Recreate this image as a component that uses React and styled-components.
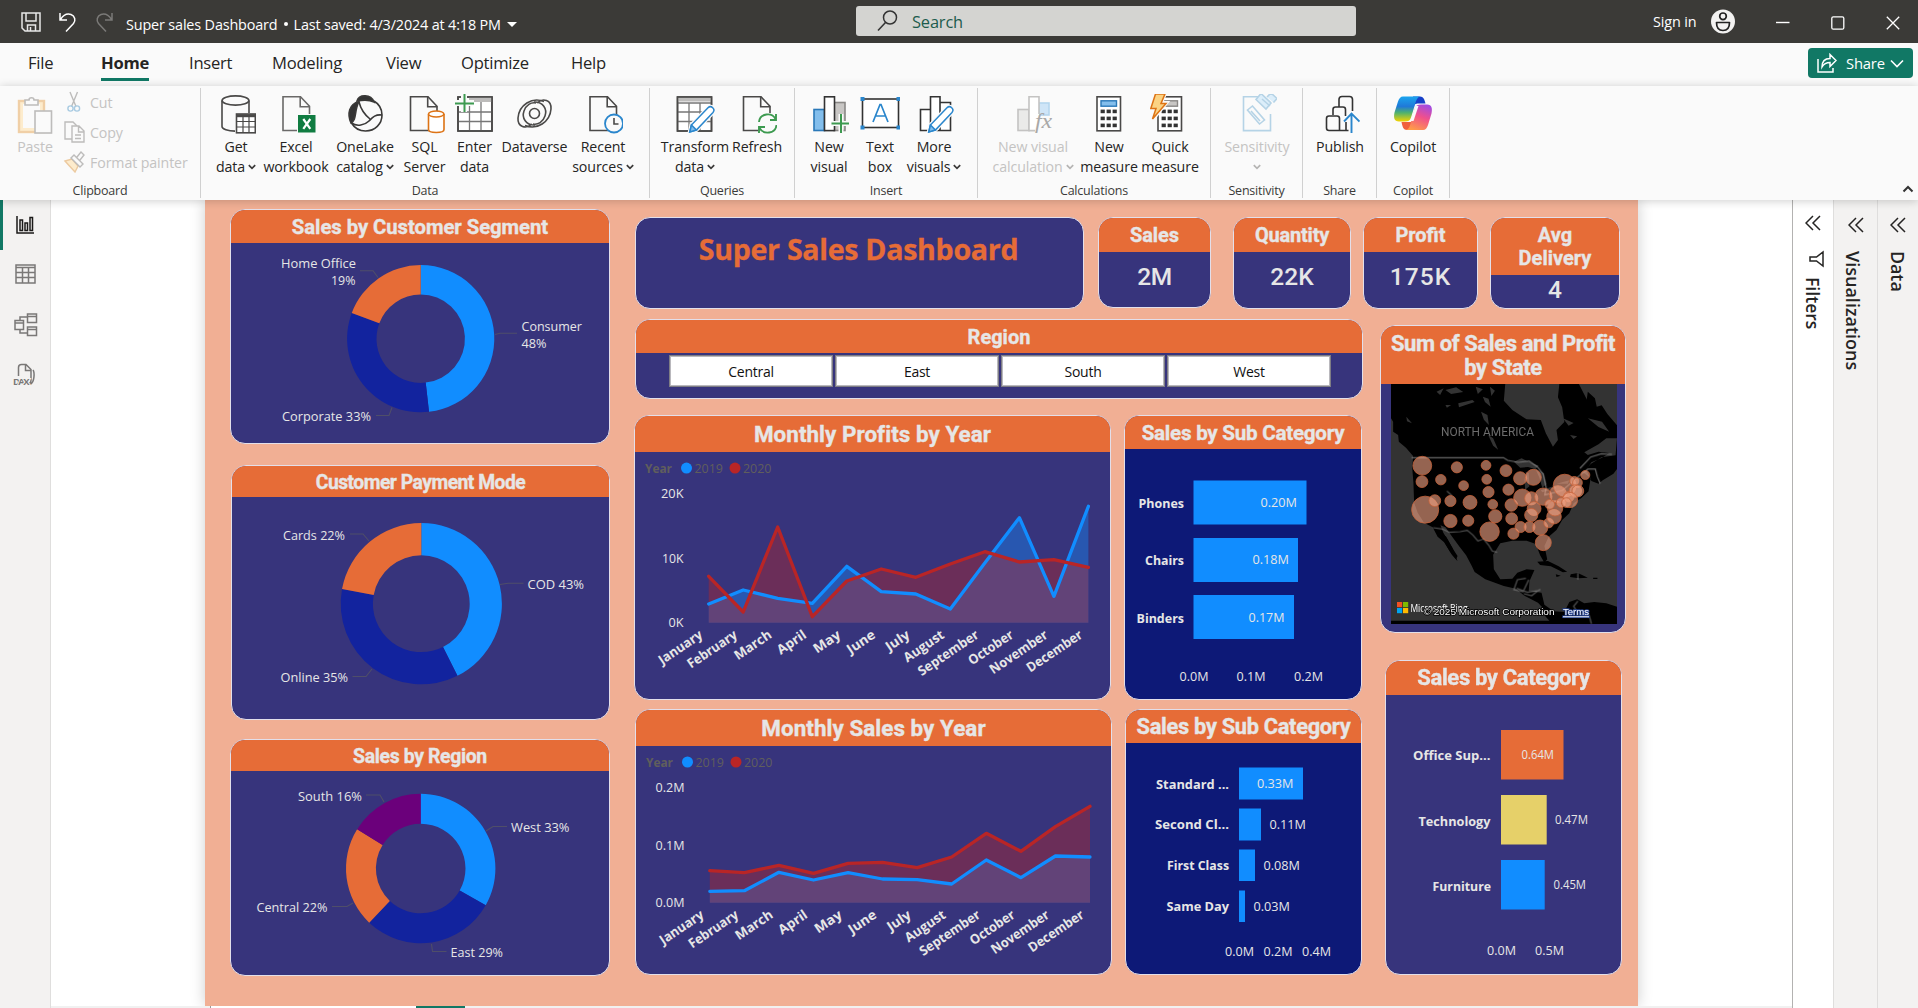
import React from "react";
import styled, { createGlobalStyle } from "styled-components";

const C = {
  bar: "#3b3a37", ribbon: "#fafafa", pane: "#f3f2f1", accent: "#117865",
  page: "#f1af94", orange: "#e66c37", indigo: "#37347c", navy: "#0d1977",
  blue: "#118dff", deep: "#12239e", purple: "#6b007b", yellow: "#e6d069",
  red: "#b92526", light: "#e6e6e6",
};
const UI = `"Open Sans", "Noto Sans", sans-serif`;
const DIN = `Roboto, "Liberation Sans", sans-serif`;

const Global = createGlobalStyle`
  * { box-sizing: border-box; }
  body { margin: 0; font-family: ${UI}; overflow: hidden; background: #fff; }
  svg { display: block; flex: none; }
`;

/* ---------- shell ---------- */
const Shell = styled.div`
  width: 1918px; height: 1008px; display: flex; flex-direction: column; overflow: hidden; color: #252423;
`;
const TitleBar = styled.header`
  height: 43px; flex: none; background: ${C.bar}; color: #fff; display: flex; align-items: center;
  padding-left: 20px; font-size: 14.4px; letter-spacing: -0.15px;
`;
const QuickIcons = styled.div`display: flex; gap: 16px; width: 106px; align-items: center;`;
const DocName = styled.div`width: 730px; display: flex; align-items: center; gap: 6px; white-space: pre; padding-top: 5px;`;
const Dot = styled.i`width: 4px; height: 4px; border-radius: 50%; background: #fff;`;
const Caret = styled.i`border: 5px solid transparent; border-top-color: #fff; border-bottom: 0;`;
const SearchBox = styled.div`
  width: 500px; height: 30px; background: #d4d4d1; border-radius: 3px; display: flex; align-items: center;
  gap: 14px; padding-left: 21px; color: #1d5c4d; font-size: 16.4px; margin-top: -1px;
`;
const SignIn = styled.div`margin-left: 297px; width: 58px; white-space: nowrap;`;
const WinButtons = styled.div`display: flex; gap: 41px; margin-left: 41px; padding-top: 2px;`;

const TabBar = styled.nav`
  height: 43px; flex: none; background: ${C.ribbon}; display: flex; padding: 4px 5px 0 28px; gap: 40px; font-size: 16.6px; position: relative;
`;
const Tab = styled.span`
  height: 34px; line-height: 32px; letter-spacing: -0.25px; white-space: nowrap; width: ${p => p.$w}px;
  font-weight: ${p => (p.$on ? 700 : 400)}; border-bottom: 3px solid ${p => (p.$on ? C.accent : "transparent")};
`;
const ShareButton = styled.button`
  margin: 1px 0 0 auto; width: 105px; height: 30px; border: 0; border-radius: 4px; background: ${C.accent}; color: #fff;
  font: 14.8px ${UI}; display: flex; align-items: center; padding: 0 9px; letter-spacing: -0.2px;
`;
const ShareText = styled.span`flex: 1; padding-left: 9px; text-align: left;`;

const Ribbon = styled.section`
  height: 114px; flex: none; background: ${C.ribbon}; display: flex; position: relative; z-index: 2;
  box-shadow: 0 1px 9px rgba(0,0,0,0.2);
`;
const Group = styled.div`
  width: ${p => p.$w}px; height: 110px; margin-top: 2px; border-right: 1px solid #d0d0d0; display: flex; flex-direction: column;
`;
const Tools = styled.div`display: flex; height: 89px; padding: 6px 0 0 ${p => p.$pad || 0}px;`;
const GroupName = styled.div`height: 21px; line-height: 28px; text-align: center; font-size: 12.5px; letter-spacing: -0.2px; color: #3b3a39;`;
const Tool = styled.div`
  width: ${p => p.$w}px; display: flex; flex-direction: column; align-items: center; font-size: 14.2px; line-height: 20px;
  letter-spacing: -0.1px; text-align: center; white-space: nowrap; color: ${p => (p.$off ? "#c4c3c2" : "#252423")};
`;
const ToolLabel = styled.div`margin-top: 3px;`;
const Line = styled.div`display: flex; align-items: center; justify-content: center; gap: 3px; min-height: 20px;`;
const ClipList = styled.div`display: flex; flex-direction: column; margin-top: -7px; padding: 0 0 0 4px;`;
const ClipRow = styled.div`height: 30px; display: flex; align-items: center; gap: 5px; font-size: 14.2px; letter-spacing: -0.1px; color: #c4c3c2; white-space: nowrap;`;
const Collapse = styled.div`margin-left: auto; align-self: flex-end; padding: 0 4px 7px 0;`;

const Body = styled.div`flex: 1; display: flex; min-height: 0;`;
const Rail = styled.aside`width: 51px; background: ${C.pane}; border-right: 1px solid #dfdedd;`;
const RailItem = styled.div`
  height: 50px; display: flex; align-items: center; padding: 0 0 0 ${p => (p.$on ? 10 : 13)}px;
  border-left: ${p => (p.$on ? 3 : 0)}px solid ${C.accent};
`;
const Workspace = styled.main`width: 1741px; padding-left: 154px; background: #fff; display: flex; flex-direction: column;`;
const Page = styled.div`
  width: 1433px; height: 806px; flex: none; background: ${C.page}; display: flex; box-shadow: 0 0 14px rgba(0,0,0,0.2);
  padding-left: 25px;
`;
const PageTabs = styled.div`height: 2px; margin-left: -154px; background: #f1f1f1; display: flex; position: relative; padding-left: 159px;`;
const PageTab = styled.i`width: ${p => p.$w}px; background: ${p => p.$c};`;

const Pane = styled.aside`
  width: ${p => p.$w}px; background: ${p => p.$bg}; border-left: 1px solid ${p => p.$line}; display: flex; flex-direction: column;
  align-items: center; padding-top: ${p => p.$top}px; 
`;
const PaneName = styled.div`
  writing-mode: vertical-rl; font-weight: 600; font-size: ${p => p.$fs || 17.4}px; line-height: 20px; margin-top: ${p => p.$mt}px;
  padding-right: ${p => p.$pr || 0}px; white-space: nowrap;
`;
const FunnelSlot = styled.div`padding: 19px 0 0 5px;`;

/* ---------- report ---------- */
const Column = styled.div`width: ${p => p.$w}px; margin-right: ${p => p.$gap || 0}px; padding-top: ${p => p.$top}px; display: flex; flex-direction: column;`;
const Strip = styled.div`display: flex; margin-bottom: ${p => p.$mb || 0}px;`;
const Card = styled.section`
  width: ${p => p.$w}px; height: ${p => p.$h}px; flex: none; border: 1px solid #e3dfea; border-radius: 15px; overflow: hidden;
  background: ${p => p.$bg || C.indigo}; margin: 0 ${p => p.$mr || 0}px ${p => p.$mb || 0}px ${p => p.$ml || 0}px;
`;
const Head = styled.h2`
  margin: 0; height: ${p => p.$h}px; background: ${C.orange}; color: ${C.light}; display: flex; align-items: center; justify-content: center;
  text-align: center; font: 700 ${p => p.$fs || 20}px/${p => p.$lh || 24}px ${DIN}; letter-spacing: ${p => p.$ls || 0}px; white-space: pre;
  padding-top: ${p => p.$pt || 0}px; -webkit-text-stroke: 0.35px ${C.light};
`;
const Banner = styled.h1`
  margin: 0; padding: 12px 2px 0 0; text-align: center; color: ${C.orange}; font: 700 28.6px/38px ${UI}; letter-spacing: -0.3px;
  -webkit-text-stroke: 0.3px ${C.orange};
`;
const Kpi = styled.div`
  text-align: center; color: ${C.light}; font: 500 24.5px/30px ${DIN}; padding-top: ${p => p.$top}px; letter-spacing: ${p => p.$ls || 0}px;
`;
const Slicer = styled.div`display: flex; gap: 2px; padding: 2px 0 0 33px;`;
const SlicerItem = styled.button`
  width: 164px; height: 32px; border: 1px solid #7e7d84; box-shadow: inset 0 0 0 1px #b9b8bd; background: #fff; font: 14px ${UI};
  color: #111; padding: 0; letter-spacing: -0.25px;
`;

/* text fitted to the span [x, x+w] */
const T = ({ x, y, w, s = 12.6, b, fill = C.light, children, ...r }) => (
  <text x={x} y={y} fontSize={s} fontWeight={b ? 700 : 400} fill={fill} fontFamily={UI}
    textLength={w} lengthAdjust="spacingAndGlyphs" {...r}>{children}</text>
);
const Chart = ({ x, y, w, h, children }) => (
  <svg width={w} height={h} viewBox={`${x} ${y} ${w} ${h}`}>{children}</svg>
);

const Donut = ({ cx, cy, R, r, parts }) => {
  let from = 0;
  const pt = (rad, f) => {
    const a = f * 2 * Math.PI;
    return `${(cx + rad * Math.sin(a)).toFixed(2)} ${(cy - rad * Math.cos(a)).toFixed(2)}`;
  };
  return parts.map(([to, color]) => {
    const big = to - from > 0.5 ? 1 : 0;
    const d = `M${pt(R, from)}A${R} ${R} 0 ${big} 1 ${pt(R, to)}L${pt(r, to)}A${r} ${r} 0 ${big} 0 ${pt(r, from)}Z`;
    from = to;
    return <path key={color} d={d} fill={color} />;
  });
};
const Leader = ({ p }) => <polyline points={p} fill="none" stroke="#4f4e69" strokeWidth="1.1" />;

const MONTHS = ["January", "February", "March", "April", "May", "June", "July", "August", "September", "October", "November", "December"];
const MW = [50, 57, 42, 32, 30, 31, 26, 46, 70, 51, 67, 64];
const AreaChart = ({ x, y, w, h, x0, x1, base, s2019, s2020, ticks, lx, ly, my }) => {
  const step = (x1 - x0) / 11;
  const line = s => s.map((v, i) => `${(x0 + i * step).toFixed(1)},${v.toFixed(1)}`).join(" ");
  const area = s => `${x0},${base} ${line(s)} ${x1},${base}`;
  return (
    <Chart x={x} y={y} w={w} h={h}>
      <T x={lx} y={ly} w={27} b fill="#605e5c">Year</T>
      <circle cx={lx + 41.5} cy={ly - 5.2} r="5.5" fill={C.blue} />
      <T x={lx + 49.5} y={ly} w={28.5} fill="#605e5c">2019</T>
      <circle cx={lx + 90} cy={ly - 5.2} r="5.5" fill={C.red} />
      <T x={lx + 98} y={ly} w={28.5} fill="#605e5c">2020</T>
      {ticks.map(([t, tx, ty, tw]) => <T key={t} x={tx} y={ty} w={tw}>{t}</T>)}
      <polygon points={area(s2019)} fill={C.blue} opacity="0.4" />
      <polygon points={area(s2020)} fill={C.red} opacity="0.4" />
      <g fill="none" strokeWidth="3.3" strokeLinejoin="round" strokeLinecap="round">
        <polyline points={line(s2019)} stroke={C.blue} />
        <polyline points={line(s2020)} stroke={C.red} />
      </g>
      {MONTHS.map((m, i) => (
        <text key={m} transform={`translate(${(x0 + i * step - 5).toFixed(1)} ${my}) rotate(-34)`} textAnchor="end" fontSize="13.3"
          fontWeight="700" fill={C.light} fontFamily={UI} textLength={MW[i]} lengthAdjust="spacingAndGlyphs">{m}</text>
      ))}
    </Chart>
  );
};

const px = (o, list) => list.map(v => o + v / 3);

const BarChart = ({ x, y, w, h, bx, bars, axis, axisY }) => (
  <Chart x={x} y={y} w={w} h={h}>
    {bars.map(([name, nx, nw, ny, top, bh, bw, value, vx, vw, vy, color]) => (
      <g key={name}>
        <rect x={bx} y={top} width={bw} height={bh} fill={color || C.blue} />
        <T x={nx} y={ny} w={nw} b>{name}</T>
        <T x={vx} y={vy} w={vw} s={12.2}>{value}</T>
      </g>
    ))}
    {axis.map(([t, tx]) => <T key={t} x={tx} y={axisY} w={29} s={12.2}>{t}</T>)}
  </Chart>
);

const BUBBLES = [
  [175, 782, 27], [174, 830, 17], [227, 824, 15], [272, 787, 16], [291, 842, 14], [354, 781, 14], [356, 823, 14], [410, 797, 17],
  [450, 820, 19], [487, 817, 23], [361, 861, 16], [417, 854, 16], [183, 914, 39], [210, 887, 17], [254, 888, 16], [309, 892, 20],
  [373, 898, 14], [254, 948, 19], [304, 947, 16], [380, 934, 19], [364, 980, 28], [425, 900, 18], [426, 941, 17], [431, 986, 16],
  [456, 878, 25], [481, 880, 19], [515, 875, 25], [489, 911, 20], [481, 930, 19], [451, 966, 16], [476, 966, 16], [506, 968, 22],
  [515, 1013, 23], [530, 954, 14], [545, 935, 21], [548, 910, 22], [533, 898, 14], [556, 868, 25], [575, 842, 33], [587, 875, 15],
  [602, 828, 13], [611, 833, 14], [605, 858, 18], [612, 858, 17], [590, 885, 22], [565, 893, 14], [580, 893, 14], [633, 810, 13],
];
const MapView = () => (
  <Chart x={1381} y={384} w={244} h={248}>
    <svg x="1391" y="384" width="226" height="240" viewBox="1391 384 226 240">
      <rect x="1391" y="384" width="226" height="240" fill="#000" />
      <g transform="translate(1391 384) scale(.3559 .3333) translate(-87 -537)">
        <g fill="#333">
          <path d="M87 640l6 10v30l14 10 2 20 20 18 20 25-2 40 3 40 2 60 10 30 18 30 24 14 14 28 20 18 14 26 18 24 4-10-16-26-10-20-14-24-8-22 14 6 20 30 18 26 20 28 16 32 8 18 30 22 52 20 34 8 22 20 40 22 16 18 4 22 12 14H87z" />
          <path d="M408 537l-4 50 24 28 40 28 40 2 14 40 20 40 14-20-4-30 22-24-6-44-12-30 4-40z" />
          <path d="M615 537l24 50 14 22 26-8 16 26 27 34V537zM570 640l30 14-14 8zM640 640l40 10 20 30-30-14zM590 690l20 4-10 8z" />
          <path d="M722 700l-30 0-22 18-40 24 10 8 30-10 30 4-20 14-30 14-14 22 14 34 20 8 12-10 30-20 10-14V1205l-30-10-34-4-28 4-20-12-22 8-14 30-30-2-26-20-8-36-36-4 2-30 14-34-22-2-26 10-14 18-34 2-18-30-2-44 20-34 34-8 40 0 26 10 12 34 12 22 8-10-8-40 12-28 22-20 16-30 20-20 12-30 22-16 20-20 6-40-20-16 20-26 30-20 40-6z" />
          <path d="M432 770l22-10 28 14 20 8-10 10-20-6-22 2zM466 800l8 4 2 40-12 10-2-30zM492 790l24 14 8 34-12 10-8-30zM508 856l40-14 4 8-40 12zM552 836l36-10-4 10z" />
          <path d="M240 555l30-8 20 14-34 6zM276 595l40-10 6 6-44 16zM325 545l20 8-14 14zM345 575l16 6 6 24-16-14zM215 560l20-10-10 20zM340 620l18 10 4 30-14-16zM130 635l16 20-14-6zM360 690l14 10 14 34-14-12zM240 600l16 0-12 8zM365 545l14 12-10 16z" />
        </g>
        <g fill="#000">
          <path d="M498 1070l30-2 30 16 24 16-12 2-34-18-30-4zM592 1108l20-4 28 14-26 2-24-4zM655 1118h12v4h-12zM550 1108l14 4-12 4zM640 560l20 20 6 30 14 30-24-20-20-30z" />
          <path d="M228 985l14 10 18 34 14 40-16-20-20-34zM686 775l18-20 10 12 8 8-14 20-22 12z" />
        </g>
        <g fill="none" stroke="#8a8a8a" strokeWidth="3.5" opacity=".75">
          <path d="M145 758h258l12 8 30 6 30-4 24 18 16 22 8 40-4 22 50-14 30-28 26-24 16-12 20 0 6 24 8 20M618 790l30-34 30-10 30 2" />
          <path d="M205 968l26 4 20 10 30-2 20-4 16 14 14 18 16-6 14 18 10 18 14 4M466 1120l-24 4-10 30 26 6 16-36M440 1150l30 12 36-6M460 1166l22 6 24-20M612 1104v20M612 1188l-12 16 14 24 30 4 6 24M244 858l14 14" opacity=".8" />
        </g>
      </g>
      <text x="1441" y="435.5" fontSize="12" fill="#6c6c6c" fontFamily={DIN} textLength="93" lengthAdjust="spacingAndGlyphs">NORTH AMERICA</text>
      <g fill="#f0a282" fillOpacity=".62" stroke="#c5623a" strokeWidth=".8">
        {BUBBLES.map(([x, y, r], i) => <circle key={i} cx={1391 + (x - 87) * 0.3559} cy={384 + (y - 537) / 3} r={r * 0.347} />)}
      </g>
      <rect x="1397" y="602" width="5.2" height="5.2" fill="#f25022" /><rect x="1403" y="602" width="5.2" height="5.2" fill="#7fba00" />
      <rect x="1397" y="608" width="5.2" height="5.2" fill="#00a4ef" /><rect x="1403" y="608" width="5.2" height="5.2" fill="#ffb900" />
      <T x={1410.5} y={611.5} w={57} s={10} fill="#fff">Microsoft Bing</T>
      <g fontFamily="Liberation Sans" fontSize="9.6">
        <text x="1423.5" y="615.3" fill="#fff" stroke="#000" strokeWidth="1.6" paintOrder="stroke" textLength="131" lengthAdjust="spacingAndGlyphs">© 2025 Microsoft Corporation</text>
        <text x="1563" y="615.3" fill="#fff" stroke="#23408f" strokeWidth="1.6" paintOrder="stroke" textLength="26" lengthAdjust="spacingAndGlyphs" textDecoration="underline">Terms</text>
      </g>
    </svg>
  </Chart>
);

/* ---------- icons ---------- */
const Chev = ({ c = "#3b3a39" }) => <svg width="8" height="6" viewBox="0 0 8 6"><path d="M.8 1.2L4 4.4 7.2 1.2" fill="none" stroke={c} strokeWidth="1.7" /></svg>;
const Ico = ({ children, s = "#4a4948" }) => <svg width="40" height="40" viewBox="0 0 40 40" fill="none" stroke={s} strokeWidth="1.6">{children}</svg>;
const Doc = ({ x = 7 }) => <g><path d={`M${x} 2.8h17.5l9 9.5V36.5H${x}z`} fill="#fafafa" /><path d={`M${x + 17.2} 2.8v10h9.6`} /></g>;
const Pencil = ({ c = "#2a86cc" }) => (
  <g stroke="#fafafa" strokeWidth="4"><path d="M14.8 38l1.6-7L33 13.8a3.4 3.4 0 0 1 5 4.6L21.4 36z" />
    <g stroke={c} strokeWidth="1.5"><path d="M14.8 38l1.6-7L33 13.8a3.4 3.4 0 0 1 5 4.6L21.4 36z" fill="#fff" /><path d="M14.8 38l1.6-7 5 5z" fill="#83beec" /></g></g>
);
const Calc = ({ x, c, off }) => (
  <g><rect x={x} y="2.8" width="23.5" height="34" fill="#fff" />
    <rect x={x + 4} y="6.8" width="15.5" height="5.4" fill={off ? "#c8c6c4" : "#83beec"} stroke={c} strokeWidth="1.4" />
    <g fill="#333" stroke="none">{[0, 1, 2].map(i => [0, 1, 2].map(j => <rect key={`${i}${j}`} x={x + 3.6 + i * 6} y={15.6 + j * 7} width="4.2" height="3.6" />))}</g></g>
);
const SWIRL = "M29 7.500C17 2.500 4 11 3 24c-.6 9 8 11.500 14 6M20 31C11 31.500 6.500 24 9 17c2-6 7-9 12-8";
const icons = {
  paste: <Ico s="#bdbcbb"><rect x="4" y="7" width="25" height="31" fill="#fdeccd" stroke="#f0cfa6" strokeWidth="2.4" /><rect x="8" y="10" width="17" height="24" fill="#fafafa" stroke="none" /><path d="M10 11V6h4c0-3 5-3 5 0h4v5z" fill="#fafafa" /><rect x="20" y="17" width="16.5" height="22" fill="#fafafa" /></Ico>,
  get: <Ico><path d="M6 6.5v26c0 2.5 6 4.6 13 4.6M33 6.5V19" /><ellipse cx="19.5" cy="6.5" rx="13.4" ry="4.6" /><rect x="20.5" y="20" width="18.8" height="18.8" fill="#fff" /><path d="M20.5 21.7h19" strokeWidth="3" /><path d="M20 27.5h19M20 33h19M27 22v17M33 22v17" strokeWidth="1.2" /></Ico>,
  excel: <Ico s="#6a6968"><Doc /><rect x="21.5" y="20.5" width="18.5" height="18.5" fill="#107c41" stroke="#fafafa" strokeWidth="1" /><path d="M27.3 25l7 9.8M34.3 25l-7 9.8" stroke="#fff" strokeWidth="2.2" /></Ico>,
  onelake: <Ico s="#3a3938"><path d="M12 7C14 0 26 0 29 8c-6-3-12-2-17-1z" fill="#333" /><path d="M14 7.500C4 10 2 20 6 29c6-3 3-12 8-21.500z" fill="#333" /><path d="M29 7c5 3 8 8 8 14 0 9-7 16-16.500 16-6 0-11-3-14-8" /><path d="M14 8c2 8 6 13 11 17M37 21c-7-1-10 3-13 6-4 4-12 6-17.500 2" /></Ico>,
  sql: <Ico><Doc x={5.5} /><g stroke="#dd7315"><path d="M23.5 20v15.500c0 4 15.500 4 15.500 0V20" fill="#fff" /><ellipse cx="31.200" cy="20" rx="7.700" ry="3" fill="#fff" /></g></Ico>,
  enter: <Ico><rect x="3" y="3" width="34" height="34" fill="#fff" /><path d="M14 5.500h23" strokeWidth="5" stroke="#bdbcbb" /><path d="M3 18h34M3 27.500h34M14.500 8v29M26 8v29" strokeWidth="1.300" stroke="#777" /><path d="M3 3h34v34H3z" /><path d="M9 0v18M0 9h19" stroke="#fafafa" strokeWidth="6" /><path d="M9.500 0v18M0 9.500h19" stroke="#3d9a50" strokeWidth="2" /></Ico>,
  dataverse: <Ico><path d={SWIRL} /><path d={SWIRL} transform="rotate(180 19.500 19.500)" /><circle cx="19.500" cy="19.500" r="5" /></Ico>,
  recent: <Ico><Doc /><circle cx="31" cy="29.500" r="9" fill="#fafafa" stroke="#2a86cc" strokeWidth="1.800" /><path d="M31 24v6h4.500" /></Ico>,
  transform: <Ico><rect x="2.500" y="3" width="34" height="34" fill="#fff" /><path d="M3 5.500h33" strokeWidth="4" stroke="#bdbcbb" /><path d="M2.500 9h34M2.500 18h34M2.500 27.500h34M14 9v28M25 9v28" strokeWidth="1.300" stroke="#777" /><path d="M2.500 3h34v34h-34z" /><Pencil /></Ico>,
  refresh: <Ico><Doc x={6.5} /><rect x="21" y="19" width="20" height="21" fill="#fafafa" stroke="none" /><g stroke="#3d9a50" strokeWidth="1.900"><path d="M22 28c1-9 13-10 16.500-3M39 20v6h-6M39.500 31c-1 9-13 10-17 3M22 39v-6h6" /></g></Ico>,
  newVisual: <Ico><rect x="25" y="8.500" width="11" height="28" fill="#c8c6c4" stroke="#8a8886" /><rect x="5" y="15.500" width="10.500" height="21" fill="#83beec" stroke="#2a78b8" /><rect x="15.500" y="2.800" width="10" height="33.800" fill="#fff" stroke="#333" /><path d="M32 20v19M22 29.500h19" stroke="#fafafa" strokeWidth="5" /><path d="M32 20v19M22.500 29.500h18" stroke="#3d9a50" strokeWidth="2" /></Ico>,
  textBox: <Ico s="#333"><rect x="2.500" y="5" width="36" height="28.500" fill="#fff" /><g fill="#2a86cc" stroke="none"><path d="M.5 3h4v4h-4zM36.500 3h4v4h-4zM.5 31.500h4v4h-4zM36.500 31.500h4v4h-4z" /></g><path d="M13 28l7-17.500h1L28 28M15.500 22h10" stroke="#2a86cc" strokeWidth="1.700" /></Ico>,
  moreVisuals: <Ico s="#333"><path d="M6.500 36.500V15.500h10v21zM26 8.500h10.500v28H26zM16.500 2.800H26v33.700h-9.500z" fill="#fff" /><Pencil /></Ico>,
  visualCalc: <Ico s="#c4c3c2"><rect x="26" y="9" width="10" height="12" fill="#cfe5f7" stroke="#b5d6ee" /><rect x="5" y="15.500" width="11" height="21" fill="#eaeae9" /><path d="M26 20V2.800H16v33.800h6" fill="#fff" /><text x="22" y="33.500" fill="#a9a8a7" stroke="none" fontFamily="Liberation Serif" fontStyle="italic" fontSize="22" textLength="17" lengthAdjust="spacingAndGlyphs">fx</text></Ico>,
  measure: <Ico><Calc x={8} c="#2a78b8" /></Ico>,
  quick: <Ico><Calc x={8} c="#8a8886" off /><path d="M5.500-.5h9.500L11 9h5L2.500 25.500 6 14H.8z" fill="#ffd27a" stroke="#fafafa" strokeWidth="4" /><path d="M5.500 0h9.500L11 9.500h5L2.500 25 6 14.500H.8z" fill="#fbd383" stroke="#dd7315" strokeWidth="1.500" /></Ico>,
  sensitivity: <Ico s="#b5d3e6"><path d="M24 2.800H6.500v33.800h27V20" /><path d="M24-.5l10 9.500-5 6-10-9.500zM30 3l4-4 6 5.500-3.500 4" fill="#dceefa" /><path d="M25 5l8 7M10.500 16l5-4 12 14-5 4zM14 17l9 10" /></Ico>,
  publish: <Ico s="#333"><path d="M19 13V5.500a3 3 0 0 1 3-3h7.500a3 3 0 0 1 3 3V17M13 21v-5.500a2.500 2.500 0 0 1 2.500-2.500H23a2.500 2.500 0 0 1 2.500 2.500V22M6.500 34V24.500A2.500 2.500 0 0 1 9 22h8a2.500 2.500 0 0 1 2.500 2.500v12H9A2.500 2.500 0 0 1 6.500 34zM19.500 36.500h9M26 28v8" /><path d="M31.500 39V20M24 27.500l7.500-8 8 8" stroke="#2a86cc" strokeWidth="1.900" /></Ico>,
  copilot: (
    <svg width="40" height="40" viewBox="0 0 40 40">
      <defs>
        <linearGradient id="cpA" x1="0" y1="0" x2="0" y2="1"><stop offset="0" stopColor="#1aa4ee" /><stop offset=".4" stopColor="#2079d8" /><stop offset=".65" stopColor="#4fb26e" /><stop offset="1" stopColor="#f5d400" /></linearGradient>
        <linearGradient id="cpB" x1=".7" y1="0" x2=".3" y2="1"><stop offset="0" stopColor="#a44be0" /><stop offset=".45" stopColor="#f0508c" /><stop offset="1" stopColor="#ff9c48" /></linearGradient>
      </defs>
      <path d="M20 2.500h7c3.500 0 4.500 3 5.500 7h-8c-3 0-4 3-5 6z" fill="#1740c8" />
      <path d="M20 36h-6c-3.500 0-4.500-3-5.500-8h9c3 0 4-3 5-6z" fill="#f0603c" />
      <path d="M10 2.500h17c-3 1-4 4-5 8l-4 13c-1 3-3 4-6 4H6c-5 0-5.500-4-4.500-9L5 7.500c1-3 2.500-5 5-5z" fill="url(#cpA)" />
      <path d="M30 36H13c3-1 4-4 5-8l4-14c1-3 3-3.500 6-3.500h6c5 0 5.500 4 4.500 9L35 31c-1 3-2.500 5-5 5z" fill="url(#cpB)" />
      <path d="M22.500 12h3l-5 15h-3z" fill="#fafafa" />
    </svg>
  ),
};
const SaveIcon = () => <svg width="22" height="22" viewBox="0 0 22 22" fill="none" stroke="#e8e8e8" strokeWidth="1.500"><path d="M2 2h18v18H5l-3-3zM6 2v8h10V2M7.500 20v-6h8v6M10.500 16v4" /></svg>;
const Undo = ({ c, flip }) => <svg width="20" height="22" viewBox="0 0 20 22" fill="none" stroke={c} strokeWidth="1.500"><g transform={flip ? "matrix(-1 0 0 1 20 0)" : undefined}><path d="M2 2v7h7M2.500 8.500C6 3 10 2.500 13 3.500c4 1.500 5 6 2.500 9L8 20.500" /></g></svg>;
const Dbl = () => <svg width="16" height="16" viewBox="0 0 16 16" fill="none" stroke="#252423" strokeWidth="1.500"><path d="M8 1L1 8l7 7M15 1L8 8l7 7" /></svg>;

const DATA_TOOLS = [
  ["get", 52, "Get", "data", 1], ["excel", 68, "Excel", "workbook"], ["onelake", 70, "OneLake", "catalog", 1], ["sql", 49, "SQL", "Server"],
  ["enter", 51, "Enter", "data"], ["dataverse", 69, "Dataverse", ""], ["recent", 68, "Recent", "sources", 1],
];
const GROUPS = [
  ["Data", 449, 9, DATA_TOOLS],
  ["Queries", 145, 10, [["transform", 70, "Transform", "data", 1], ["refresh", 54, "Refresh", ""]]],
  ["Insert", 183, 8, [["newVisual", 52, "New", "visual"], ["textBox", 50, "Text", "box"], ["moreVisuals", 58, "More", "visuals", 1]]],
  ["Calculations", 233, 13, [["visualCalc", 84, "New visual", "calculation", 1, 1], ["measure", 68, "New", "measure"], ["quick", 54, "Quick", "measure"]]],
  ["Sensitivity", 92, 6, [["sensitivity", 80, "Sensitivity", "", 1, 1]]],
  ["Share", 74, 3, [["publish", 68, "Publish", ""]]],
  ["Copilot", 73, 3, [["copilot", 66, "Copilot", ""]]],
];

function Toolbar() {
  return (
    <Ribbon>
      <Group $w={201}>
        <Tools $pad={17}>
          <Tool $w={36} $off>{icons.paste}<ToolLabel>Paste</ToolLabel></Tool>
          <ClipList>
            <ClipRow>
              <svg width="28" height="22" viewBox="-6 0 28 22" fill="none" stroke="#bdbcbb" strokeWidth="1.400"><path d="M7 1l6 14.500M14.500 1L8.500 15.500" /><g stroke="#a9cbe2"><circle cx="7.500" cy="17.500" r="2.600" /><circle cx="14" cy="17.500" r="2.600" /></g></svg>Cut
            </ClipRow>
            <ClipRow>
              <svg width="28" height="22" viewBox="-6 0 28 22" fill="none" stroke="#bdbcbb" strokeWidth="1.400"><path d="M9 18H2V1h8l4 4" /><path d="M9 5h7l5 5v11H9zM15.500 5v6H21M12 14h6M12 17.500h6" fill="#fafafa" /></svg>Copy
            </ClipRow>
            <ClipRow>
              <svg width="28" height="22" viewBox="-6 0 28 22" fill="none" stroke="#bdbcbb" strokeWidth="1.400"><path d="M2 10l7-2 6 7-3 6z" fill="#fdeccd" stroke="#eccaa0" /><path d="M8 7l3-3 9 9-3 3zM14 6l4-5 3 3-4 5" fill="#fafafa" /></svg>Format painter
            </ClipRow>
          </ClipList>
        </Tools>
        <GroupName>Clipboard</GroupName>
      </Group>
      {GROUPS.map(([name, w, pad, tools]) => (
        <Group key={name} $w={w}>
          <Tools $pad={pad}>
            {tools.map(([ic, tw, a, b, chev, off]) => (
              <Tool key={ic} $w={tw} $off={off}>
                {icons[ic]}
                <ToolLabel><Line>{a}</Line><Line>{b}{chev ? <Chev c={off ? "#b5b4b3" : undefined} /> : null}</Line></ToolLabel>
              </Tool>
            ))}
          </Tools>
          <GroupName>{name}</GroupName>
        </Group>
      ))}
      <Collapse><svg width="12" height="8" viewBox="0 0 12 8"><path d="M1.500 6.500L6 2l4.500 4.500" fill="none" stroke="#333" strokeWidth="2" /></svg></Collapse>
    </Ribbon>
  );
}

function Report() {
  return (
    <Page>
      <Column $w={380} $gap={24} $top={9}>
        <Card $w={380} $h={235} $mb={21}>
          <Head $h={33} $fs={20.3} $ls={-0.05}>Sales by Customer Segment</Head>
          <Chart x={231} y={243} w={378} h={200}>
            <Donut cx={420.7} cy={338.7} R={73.6} r={44.2} parts={[[0.482, C.blue], [0.807, C.deep], [1, C.orange]]} />
            <Leader p="360,270.7 373,270.7 378,277.5" /><Leader p="495,334.5 500,333.3 517,333.3" /><Leader p="376,415.500 389,415.500 392,407.500" />
            <T x={281} y={268} w={75}>Home Office</T><T x={331} y={285} w={24.500}>19%</T>
            <T x={521.5} y={331} w={60.500}>Consumer</T><T x={521.5} y={348} w={25}>48%</T>
            <T x={282} y={421} w={89}>Corporate 33%</T>
          </Chart>
        </Card>
        <Card $w={379} $h={255} $ml={1} $mb={19}>
          <Head $h={31} $fs={19.3} $ls={-0.5} $pt={2}>Customer Payment Mode</Head>
          <Chart x={232} y={497} w={377} h={223}>
            <Donut cx={421.3} cy={603.7} R={80.6} r={48.4} parts={[[0.426, C.blue], [0.779, C.deep], [1, C.orange]]} />
            <Leader p="350,534 363,534 369,541" /><Leader p="500,584.500 508,583.300 523.500,583.300" /><Leader p="352.500,676.500 366,676.500 372,669" />
            <T x={283} y={540} w={62}>Cards 22%</T><T x={527.5} y={589} w={56.5}>COD 43%</T><T x={280.5} y={682} w={67.5}>Online 35%</T>
          </Chart>
        </Card>
        <Card $w={380} $h={237}>
          <Head $h={31} $fs={19.4} $ls={-0.35} $pt={2}>Sales by Region</Head>
          <Chart x={231} y={771} w={378} h={204}>
            <Donut cx={420.7} cy={868.5} R={74.7} r={44.8} parts={[[0.332, C.blue], [0.621, C.deep], [0.838, C.orange], [1, C.purple]]} />
            <Leader p="366,795 380,795 384,802" /><Leader p="486,831 493,826.500 507,826.500" /><Leader p="332,906.500 347,906.500 353,903" /><Leader p="431.500,944 432.500,951.500 446.500,951.500" />
            <T x={298} y={801} w={64}>South 16%</T><T x={511} y={832} w={58.5}>West 33%</T><T x={256.5} y={912} w={71}>Central 22%</T><T x={450.5} y={957} w={52.5}>East 29%</T>
          </Chart>
        </Card>
      </Column>

      <Column $w={729} $top={17}>
        <Strip $mb={10}>
          <Card $w={449} $h={92} $ml={1} $mr={14}><Banner>Super Sales Dashboard</Banner></Card>
          <Card $w={113} $h={91} $mr={22}><Head $h={34} $fs={20} $ls={-0.1}>Sales</Head><Kpi $top={10} $ls={-0.5}>2M</Kpi></Card>
          <Card $w={118} $h={92}><Head $h={34} $fs={20} $ls={-0.2}>Quantity</Head><Kpi $top={10}>22K</Kpi></Card>
        </Strip>
        <Card $w={728} $h={80} $ml={1} $mb={16}>
          <Head $h={33} $fs={20}>Region</Head>
          <Slicer>{["Central", "East", "South", "West"].map(r => <SlicerItem key={r}>{r}</SlicerItem>)}</Slicer>
        </Card>
        <Strip $mb={9}>
          <Card $w={477} $h={285} $mr={13}>
            <Head $h={36} $fs={22.4} $ls={0.05}>Monthly Profits by Year</Head>
            <AreaChart x={635} y={452} w={475} h={247} x0={708.7} x1={1088.4} base={622.7} lx={645} ly={473.3} my={637}
              ticks={[["20K", 661, 498, 22.5], ["10K", 662, 563, 21.5], ["0K", 668.5, 627, 15]]}
              s2019={px(405, [597, 555, 580, 595, 484, 560, 567, 612, 474, 338, 574, 304])}
              s2020={px(405, [514, 621, 366, 635, 528, 492, 517, 477, 440, 471, 464, 487])} />
          </Card>
          <Card $w={238} $h={285} $bg={C.navy}>
            <Head $h={33} $fs={20.6} $ls={-0.25}>Sales by Sub Category</Head>
            <BarChart x={1125} y={449} w={236} h={250} bx={1193.5} axisY={681}
              bars={[
                ["Phones", 1138.500, 45.500, 508, 480.500, 44, 113, "0.20M", 1260.500, 36.500, 507],
                ["Chairs", 1145, 39, 565, 538, 44, 104.500, "0.18M", 1252.500, 36.500, 564],
                ["Binders", 1136.500, 47.500, 622.500, 595, 44, 100.500, "0.17M", 1248.500, 36, 621.500],
              ]}
              axis={[["0.0M", 1179.500], ["0.1M", 1236.500], ["0.2M", 1294]]} />
          </Card>
        </Strip>
        <Strip>
          <Card $w={477} $h={266} $ml={1} $mr={13}>
            <Head $h={36} $fs={22.4} $ls={0.05}>Monthly Sales by Year</Head>
            <AreaChart x={636} y={746} w={475} h={228} x0={709.8} x1={1090} base={902.7} lx={646} ly={767.2} my={917}
              ticks={[["0.2M", 655.500, 792, 29], ["0.1M", 655.500, 850, 29], ["0.0M", 655.500, 907, 29]]}
              s2019={px(700, [574, 572, 517, 540, 518, 537, 539, 552, 480, 533, 468, 471])}
              s2020={px(700, [512, 518, 496, 520, 490, 487, 503, 471, 400, 454, 380, 319])} />
          </Card>
          <Card $w={237} $h={266} $bg={C.navy}>
            <Head $h={33} $fs={21.8} $ls={-0.3}>Sales by Sub Category</Head>
            <BarChart x={1126} y={743} w={235} h={231} bx={1239} axisY={956}
              bars={[
                ["Standard ...", 1156, 73, 789, 767.500, 32, 64, "0.33M", 1257, 36.500, 788],
                ["Second Cl...", 1155, 74, 829, 808.500, 32, 22, "0.11M", 1269.500, 36.500, 828.700],
                ["First Class", 1167, 62, 870, 849.500, 31.500, 16, "0.08M", 1263.500, 36.500, 869.700],
                ["Same Day", 1166.500, 62.500, 911, 890.500, 31.500, 6, "0.03M", 1253.500, 36.500, 910.600],
              ]}
              axis={[["0.0M", 1225], ["0.2M", 1263.500], ["0.4M", 1302]]} />
          </Card>
        </Strip>
      </Column>

      <Column $w={270} $top={17}>
        <Strip $mb={16}>
          <Card $w={115} $h={92} $mr={12}><Head $h={34} $fs={20}>Profit</Head><Kpi $top={10} $ls={1.1}>175K</Kpi></Card>
          <Card $w={130} $h={92}><Head $h={57} $fs={20} $lh={23}>{"Avg\nDelivery"}</Head><Kpi $top={-1}>4</Kpi></Card>
        </Strip>
        <Card $w={246} $h={308} $ml={17} $mb={27}>
          <Head $h={58} $fs={22} $lh={24} $ls={-0.4} $pt={1}>{"Sum of Sales and Profit\nby State"}</Head>
          <MapView />
        </Card>
        <Card $w={237} $h={315} $ml={22}>
          <Head $h={34} $fs={22} $ls={-0.35}>Sales by Category</Head>
          <BarChart x={1386} y={695} w={235} h={279} bx={1501} axisY={955}
            bars={[
              ["Office Sup...", 1413, 77.500, 760, 730, 49.500, 62.500, "0.64M", 1521.500, 32.500, 759, C.orange],
              ["Technology", 1418.500, 72, 826, 795, 49.500, 45.700, "0.47M", 1555, 33, 824, C.yellow],
              ["Furniture", 1432.500, 58.500, 891, 860, 49.500, 43.700, "0.45M", 1553.500, 32.500, 889],
            ]}
            axis={[["0.0M", 1487], ["0.5M", 1535]]} />
        </Card>
      </Column>
    </Page>
  );
}

export default function App() {
  return (
    <Shell>
      <Global />
      <TitleBar>
        <QuickIcons><SaveIcon /><Undo c="#fff" /><Undo c="#7b7a78" flip /></QuickIcons>
        <DocName>Super sales Dashboard<Dot />Last saved: 4/3/2024 at 4:18 PM<Caret /></DocName>
        <SearchBox>
          <svg width="21" height="22" viewBox="0 0 21 22" fill="none" stroke="#333" strokeWidth="1.500"><circle cx="13" cy="7.500" r="6.500" /><path d="M8.500 12.500L1 20.500" /></svg>Search
        </SearchBox>
        <SignIn>Sign in</SignIn>
        <svg width="24" height="26" viewBox="0 0 24 26"><circle cx="12" cy="12.500" r="12" fill="#f3f2f1" /><g fill="none" stroke="#222" strokeWidth="1.700"><circle cx="12" cy="7.300" r="3.300" /><path d="M5.500 13.500h13c0 5-2.500 8-6.500 8s-6.500-3-6.500-8z" strokeLinejoin="round" /></g></svg>
        <WinButtons>
          <svg width="14" height="14" viewBox="0 0 14 14"><path d="M0 6.500h13.500" stroke="#fff" strokeWidth="1.400" /></svg>
          <svg width="14" height="14" viewBox="0 0 14 14"><rect x=".8" y=".8" width="12" height="12.400" rx="1.500" fill="none" stroke="#fff" strokeWidth="1.300" /></svg>
          <svg width="14" height="14" viewBox="0 0 14 14"><path d="M.8.8l12.400 12.400M13.200.8L.8 13.200" stroke="#fff" strokeWidth="1.300" /></svg>
        </WinButtons>
      </TitleBar>
      <TabBar>
        {[["File", 33], ["Home", 48, 1], ["Insert", 43], ["Modeling", 74], ["View", 35], ["Optimize", 70], ["Help", 37]].map(([t, w, on]) => <Tab key={t} $w={w} $on={on}>{t}</Tab>)}
        <ShareButton>
          <svg width="20" height="20" viewBox="0 0 20 20" fill="none" stroke="#fff" strokeWidth="1.500"><path d="M1 6v13h15v-4M5 14c0-6 3-8.500 8-8.500V1.500l6 6-6 6V9.500c-4 0-6 1-8 4.500z" /></svg>
          <ShareText>Share</ShareText>
          <svg width="14" height="9" viewBox="0 0 14 9"><path d="M1 1.500l6 6 6-6" fill="none" stroke="#fff" strokeWidth="1.600" /></svg>
        </ShareButton>
      </TabBar>
      <Toolbar />
      <Body>
        <Rail>
          <RailItem $on><svg width="24" height="24" viewBox="0 0 24 24" fill="none" stroke="#1b1a19" strokeWidth="1.500"><path d="M4 3v17h17" /><path d="M7 7h2.500v10.500H7zM12 10h2.500v7.500H12zM17 4.500h2.500v13H17z" /></svg></RailItem>
          <RailItem><svg width="24" height="24" viewBox="0 0 24 24" fill="none" stroke="#7a7877" strokeWidth="1.500"><path d="M3 2h19v18H3zM3 4.500h19M3 9.500h19M3 14.500h19M9.500 4.500V20M15.500 4.500V20" /></svg></RailItem>
          <RailItem><svg width="26" height="26" viewBox="0 0 26 26" fill="none" stroke="#7a7877" strokeWidth="1.500"><path d="M2 8.500h8.500v9H2zM2 11h8.500M14.500 2h9v8.500h-9zM14.500 4.500h9M14.500 15h9v8.500h-9zM14.500 17.500h9M7 8.500V5h7.500M7 17.500v3.500h7.500" /></svg></RailItem>
          <RailItem><svg width="24" height="26" viewBox="0 0 24 26" fill="none" stroke="#7a7877" strokeWidth="1.500"><path d="M5.500 14V5.500a3 3 0 0 1 3-3H13l5 5V18c0 2-1 3.500-3 3.500M12.500 3v5.500H18M20 8c1.500 2 2 12-3 14.500" /><text x="0" y="23" fill="#7a7877" stroke="#f3f2f1" strokeWidth="2" paintOrder="stroke" fontFamily="Open Sans" fontWeight="700" fontSize="9.500" textLength="16.500">DAX</text></svg></RailItem>
        </Rail>
        <Workspace>
          <Report />
          <PageTabs><PageTab $w={1} $c="#999" /><PageTab $w={205} $c="#fff" /><PageTab $w={49} $c={C.accent} /></PageTabs>
        </Workspace>
        <Pane $w={41} $bg="#fff" $line="#b3b2b1" $top={15}>
          <Dbl />
          <FunnelSlot><svg width="18" height="18" viewBox="0 0 18 18" fill="none" stroke="#252423" strokeWidth="1.500"><path d="M16 2v14l-6.500-5H3V7h6.500z" /></svg></FunnelSlot>
          <PaneName $mt={9} $fs={17.6}>Filters</PaneName>
        </Pane>
        <Pane $w={44} $bg={C.pane} $line="#dfdedd" $top={17}><Dbl /><PaneName $mt={18} $fs={18} $pr={6}>Visualizations</PaneName></Pane>
        <Pane $w={41} $bg={C.pane} $line="#dfdedd" $top={17}><Dbl /><PaneName $mt={18} $fs={17.8}>Data</PaneName></Pane>
      </Body>
    </Shell>
  );
}
